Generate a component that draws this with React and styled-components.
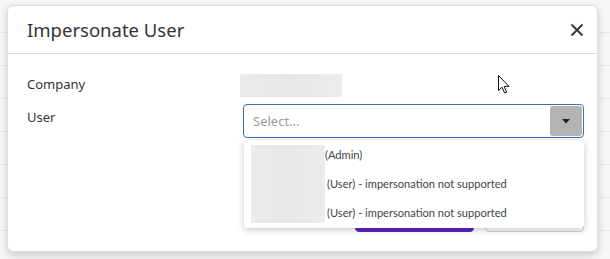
import React from "react";
import styled, { createGlobalStyle } from "styled-components";

const Global = createGlobalStyle`
  html, body {
    margin: 0;
    padding: 0;
    width: 610px;
    height: 259px;
    overflow: hidden;
    background: #f7f7f7;
    font-family: "Noto Sans", "Open Sans", sans-serif;
  }
`;

const Page = styled.div`
  position: relative;
  width: 610px;
  height: 259px;
  overflow: hidden;
`;

const BackRows = styled.div`
  display: flex;
  flex-direction: column;
`;

const BackRow = styled.div`
  height: 32px;
  border-bottom: 1px solid #e7e7e7;
`;

const Modal = styled.div`
  position: absolute;
  left: 7px;
  top: 5px;
  width: 591px;
  height: 247px;
  box-sizing: border-box;
  background: #fff;
  border: 1px solid #dedede;
  border-radius: 6px;
  box-shadow: 0 3px 9px rgba(0, 0, 0, 0.18);
  display: flex;
  flex-direction: column;
`;

const Header = styled.div`
  height: 48px;
  box-sizing: border-box;
  border-bottom: 1px solid #dcdcdc;
  display: flex;
  align-items: center;
  justify-content: space-between;
  padding: 0 10px 0 19px;
`;

const Title = styled.h2`
  margin: 0;
  font-size: 18.5px;
  font-weight: 400;
  color: #333;
`;

const Close = styled.button`
  border: 0;
  background: none;
  padding: 0;
  width: 20px;
  height: 20px;
  display: flex;
  align-items: center;
  justify-content: center;
  cursor: pointer;
`;

const Body = styled.div`
  display: grid;
  grid-template-columns: 216px 1fr;
  row-gap: 7px;
  padding: 20px 13px 0 19px;
`;

const Label = styled.div`
  font-size: 13px;
  line-height: 18px;
  color: #333;
  align-self: start;
  padding-top: ${(p) => p.$pt}px;
`;

const Blurred = styled.div`
  flex: none;
  width: ${(p) => p.$w}px;
  height: ${(p) => p.$h}px;
  background: linear-gradient(90deg, #ebebeb, #e6e6e6 50%, #ececec);
  margin-left: ${(p) => p.$ml || 0}px;
`;

const SelectWrap = styled.div`
  position: relative;
`;

const SelectBox = styled.div`
  height: 34px;
  box-sizing: border-box;
  border: 1px solid #3470b4;
  border-radius: 4px;
  display: flex;
  align-items: center;
  justify-content: space-between;
  padding: 0 1px 0 9px;
`;

const Placeholder = styled.span`
  font-size: 13px;
  color: #999;
`;

const ArrowBtn = styled.div`
  width: 32px;
  height: 30px;
  background: #b3b3b3;
  border-radius: 3px;
  display: flex;
  align-items: center;
  justify-content: center;
`;

const Menu = styled.div`
  position: absolute;
  top: 36px;
  left: 1px;
  right: 0;
  height: 88px;
  box-sizing: border-box;
  z-index: 2;
  background: #fff;
  border-radius: 4px;
  box-shadow: 0 2px 7px rgba(0, 0, 0, 0.22);
  padding: 5px 7px;
  display: flex;
  align-items: flex-start;
`;

const Options = styled.div`
  display: flex;
  flex-direction: column;
  margin-top: -5px;
`;

const Option = styled.div`
  height: 29px;
  display: flex;
  align-items: center;
  font-family: Lato, "Noto Sans", sans-serif;
  font-size: 11.1px;
  color: #444;
  padding-left: ${(p) => p.$pl || 0}px;
`;

const Footer = styled.div`
  margin-top: auto;
  display: flex;
  justify-content: flex-end;
  gap: 11px;
  padding: 0 13px 19px 0;
`;

const Button = styled.button`
  height: 34px;
  width: ${(p) => p.$w}px;
  border-radius: 4px;
  border: 1px solid ${(p) => (p.$primary ? "#5a23c8" : "#cfcfcf")};
  background: ${(p) => (p.$primary ? "#5a23c8" : "#fff")};
`;

const Cursor = styled.svg`
  position: absolute;
  left: 498px;
  top: 75px;
`;

export default function App() {
  return (
    <Page>
      <Global />
      <BackRows>
        {Array.from({ length: 8 }).map((_, i) => (
          <BackRow key={i} />
        ))}
      </BackRows>
      <Modal>
        <Header>
          <Title>Impersonate User</Title>
          <Close aria-label="Close">
            <svg width="14" height="14" viewBox="0 0 14 14">
              <path d="M1.5 1.5L12.5 12.5M12.5 1.5L1.5 12.5" stroke="#333" strokeWidth="1.8" />
            </svg>
          </Close>
        </Header>
        <Body>
          <Label $pt={1}>Company</Label>
          <Blurred $w={102} $h={23} $ml={-3} />
          <Label $pt={4}>User</Label>
          <SelectWrap>
            <SelectBox>
              <Placeholder>Select...</Placeholder>
              <ArrowBtn>
                <svg width="8" height="5" viewBox="0 0 8 5">
                  <path d="M0 0H8L4 4.5Z" fill="#222" />
                </svg>
              </ArrowBtn>
            </SelectBox>
            <Menu>
              <Blurred $w={74} $h={78} />
              <Options>
                <Option>(Admin)</Option>
                <Option $pl={2}>(User) - impersonation not supported</Option>
                <Option $pl={2}>(User) - impersonation not supported</Option>
              </Options>
            </Menu>
          </SelectWrap>
        </Body>
        <Footer>
          <Button $primary $w={119} />
          <Button $w={99} />
        </Footer>
      </Modal>
      <Cursor width="12" height="19" viewBox="0 0 12 19">
        <path d="M0.5 0.5V15.5L4 12.2L6.6 18L8.6 17.1L6.1 11.4H11Z" fill="#fff" stroke="#111" strokeWidth="1" strokeLinejoin="round" />
      </Cursor>
    </Page>
  );
}
